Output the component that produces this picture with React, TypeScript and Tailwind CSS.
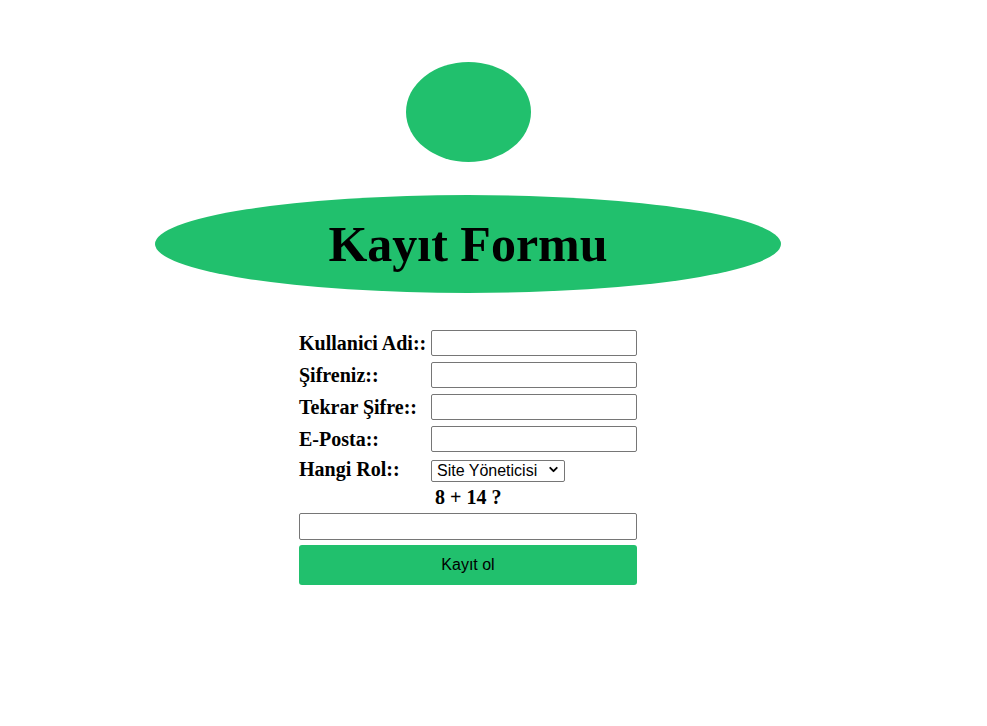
import {ChevronDown} from 'lucide-react';

const serif = "font-['Liberation_Serif','Times_New_Roman',serif]";
const sans = "font-['Liberation_Sans',Arial,sans-serif]";

function Row({label, type = 'text'}: {label: string; type?: string}) {
  return (
    <>
      <label className={`${serif} flex h-[26px] items-center text-[20px] font-bold text-black`}>{label}</label>
      <input
        type={type}
        className="h-[26px] w-[206px] rounded-[2px] border border-[#767676] bg-white px-1 text-[16px] outline-none"
      />
    </>
  );
}

export default function App() {
  return (
    <div className="min-h-[726px] w-full bg-white">
      <div className="flex w-[936px] flex-col items-center pt-[62px]">
        <div className="h-[100px] w-[125px] rounded-[50%] bg-[#21c06d]" />

        <div className="mt-[33px] flex h-[98px] w-[626px] items-center justify-center rounded-[50%] bg-[#21c06d]">
          <h1 className={`${serif} text-[50px] font-bold leading-none text-black`}>Kayıt Formu</h1>
        </div>

        <form className="mt-[37px] grid w-[338px] grid-cols-[132px_206px] gap-y-[6px]">
          <Row label="Kullanici Adi::" />
          <Row label="Şifreniz::" type="password" />
          <Row label="Tekrar Şifre::" type="password" />
          <Row label="E-Posta::" />

          <label className={`${serif} flex h-[22px] items-center text-[20px] font-bold text-black`}>Hangi Rol::</label>
          <div className="relative h-[22px] w-[134px]">
            <select
              className={`${sans} h-[22px] w-[134px] appearance-none rounded-[2px] border border-[#767676] bg-white pl-[5px] text-[16px] leading-none text-black outline-none`}
            >
              <option>Site Yöneticisi</option>
              <option>Kullanıcı</option>
            </select>
            <ChevronDown
              className="pointer-events-none absolute right-[5px] top-[5px] h-[13px] w-[13px] text-black"
              strokeWidth={3.5}
            />
          </div>

          <div />
          <div className={`${serif} flex h-[21px] items-center pl-[4px] text-[20px] font-bold text-black`}>8 + 14 ?</div>

          <input
            type="text"
            className="col-span-2 h-[27px] w-[338px] rounded-[2px] border border-[#767676] bg-white px-1 text-[16px] outline-none"
          />

          <button
            type="submit"
            className={`${sans} col-span-2 mt-[-1px] h-[40px] w-[338px] rounded-[3px] bg-[#21c06d] text-[16px] text-black`}
          >
            Kayıt ol
          </button>
        </form>
      </div>
    </div>
  );
}
